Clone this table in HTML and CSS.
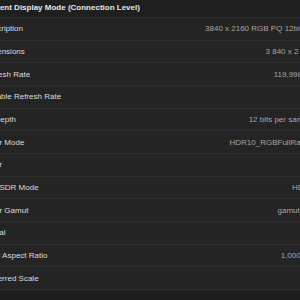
FILE: index.html
```html
<!DOCTYPE html>
<html>
<head>
  <meta charset="utf-8">
  <link rel="stylesheet" href="styles.css">
</head>
<body>
  <div class="panel">
    <div class="panel-header">Current Display Mode (Connection Level)</div>

    <div class="row"><span class="label">Description</span><span class="value">3840 x 2160 RGB PQ 12bit 4K</span></div>
    <div class="row"><span class="label">Dimensions</span><span class="value">3 840 x 2 160</span></div>
    <div class="row"><span class="label">Refresh Rate</span><span class="value">119,998 Hz</span></div>
    <div class="row"><span class="label">Variable Refresh Rate</span><span class="value"></span></div>
    <div class="row"><span class="label">Bit Depth</span><span class="value">12 bits per sample</span></div>
    <div class="row"><span class="label">Color Mode</span><span class="value">HDR10_RGBFullRange</span></div>
    <div class="row"><span class="label">Color</span><span class="value"></span></div>
    <div class="row"><span class="label">Use SDR Mode</span><span class="value">HDR+</span></div>
    <div class="row"><span class="label">Color Gamut</span><span class="value">gamut_P3</span></div>
    <div class="row"><span class="label">Virtual</span><span class="value"></span></div>
    <div class="row"><span class="label">Pixel Aspect Ratio</span><span class="value">1,000000</span></div>
    <div class="row"><span class="label">Preferred Scale</span><span class="value"></span></div>
  </div>
</body>
</html>
```

FILE: styles.css
```css
html, body {
  margin: 0;
  height: 100%;
  overflow: hidden;
}

body {
  background: #1d1d1d;
  font-family: "Liberation Sans", Arial, sans-serif;
  font-size: 8px;
  color: #dcdcdc;
}

/* the table is wider than the window; it is scrolled a little to the right */
.panel {
  width: 344px;
  margin-left: -22px;
  background: #242424;
}

.panel-header {
  height: 18px;
  padding: 0 8px 2px 5px;
  box-sizing: border-box;
  display: flex;
  align-items: center;
  background: #1f1f1f;
  border-bottom: 1px solid #2f2f2f;
  font-weight: bold;
  color: #e6e6e6;
}

.row {
  height: 22.67px;
  padding: 0 8px 0 5px;
  box-sizing: border-box;
  display: flex;
  align-items: center;
  justify-content: space-between;
  border-bottom: 1px solid #2f2f2f;
  white-space: nowrap;
}

.label {
  color: #dcdcdc;
}

.value {
  color: #a6a6a6;
  text-align: right;
}
```
